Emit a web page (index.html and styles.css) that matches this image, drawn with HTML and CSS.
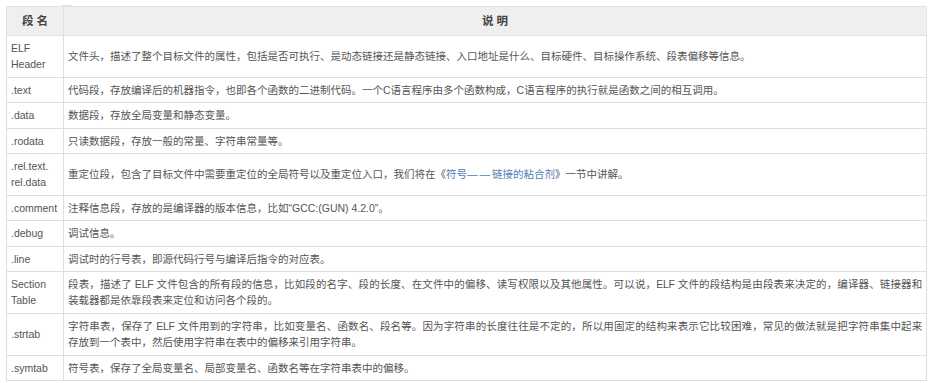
FILE: index.html
```html
<!DOCTYPE html>
<html lang="zh">
<head>
<meta charset="utf-8">
<link rel="stylesheet" href="styles.css">
</head>
<body>
<div class="wrap">
<span class="grip"></span>
<table class="sections">
  <thead>
    <tr><th class="c1">段 名</th><th>说 明</th></tr>
  </thead>
  <tbody>
    <tr><td class="c1">ELF<br>Header</td><td>文件头，描述了整个目标文件的属性，包括是否可执行、是动态链接还是静态链接、入口地址是什么、目标硬件、目标操作系统、段表偏移等信息。</td></tr>
    <tr><td class="c1">.text</td><td>代码段，存放编译后的机器指令，也即各个函数的二进制代码。一个C语言程序由多个函数构成，C语言程序的执行就是函数之间的相互调用。</td></tr>
    <tr><td class="c1">.data</td><td>数据段，存放全局变量和静态变量。</td></tr>
    <tr><td class="c1">.rodata</td><td>只读数据段，存放一般的常量、字符串常量等。</td></tr>
    <tr><td class="c1">.rel.text.<br>rel.data</td><td>重定位段，包含了目标文件中需要重定位的全局符号以及重定位入口，我们将在《<a class="link" href="#">符号<span class="dash">——</span>链接的粘合剂</a>》一节中讲解。</td></tr>
    <tr><td class="c1">.comment</td><td>注释信息段，存放的是编译器的版本信息，比如“GCC:(GUN) 4.2.0”。</td></tr>
    <tr><td class="c1">.debug</td><td>调试信息。</td></tr>
    <tr><td class="c1">.line</td><td>调试时的行号表，即源代码行号与编译后指令的对应表。</td></tr>
    <tr><td class="c1">Section<br>Table</td><td><span class="jl">段表，描述了 ELF 文件包含的所有段的信息，比如段的名字、段的长度、在文件中的偏移、读写权限以及其他属性。可以说，ELF 文件的段结构是由段表来决定的，编译器、链接器和</span>装载器都是依靠段表来定位和访问各个段的。</td></tr>
    <tr><td class="c1">.strtab</td><td><span class="jl">字符串表，保存了 ELF 文件用到的字符串，比如变量名、函数名、段名等。因为字符串的长度往往是不定的，所以用固定的结构来表示它比较困难，常见的做法就是把字符串集中起来</span>存放到一个表中，然后使用字符串在表中的偏移来引用字符串。</td></tr>
    <tr><td class="c1">.symtab</td><td>符号表，保存了全局变量名、局部变量名、函数名等在字符串表中的偏移。</td></tr>
  </tbody>
</table>
</div>
</body>
</html>
```

FILE: styles.css
```css
html, body {
  margin: 0;
  padding: 0;
  background: #ffffff;
}
body {
  padding: 6px;
  font-family: "Liberation Sans", "Noto Sans CJK SC", sans-serif;
  color: #555555;
}
.wrap {
  position: relative;
  width: 921px;
}
.grip {
  position: absolute;
  left: 56px;
  top: -1px;
  width: 10px;
  height: 1px;
  background: #e2e2e2;
}
.sections {
  width: 921px;
  border-collapse: collapse;
  table-layout: fixed;
  font-size: 10.5px;
  line-height: 16.4px;
}
.sections th,
.sections td {
  border: 1px solid #dedede;
  padding: 4px 4px;
  vertical-align: middle;
  text-align: left;
}
.sections th {
  background: #efefef;
  color: #444444;
  font-weight: bold;
  font-size: 11.5px;
  line-height: 16px;
  padding: 6px 4px;
  text-align: center;
  border-color: #e2e2e2;
}
.sections .c1 {
  width: 48px;
}
.jl {
  display: block;
  text-align: justify;
  text-align-last: justify;
  letter-spacing: -0.2px;
}
.link {
  color: #4f7db8;
  text-decoration: none;
}
.dash {
  letter-spacing: 2px;
}
```
